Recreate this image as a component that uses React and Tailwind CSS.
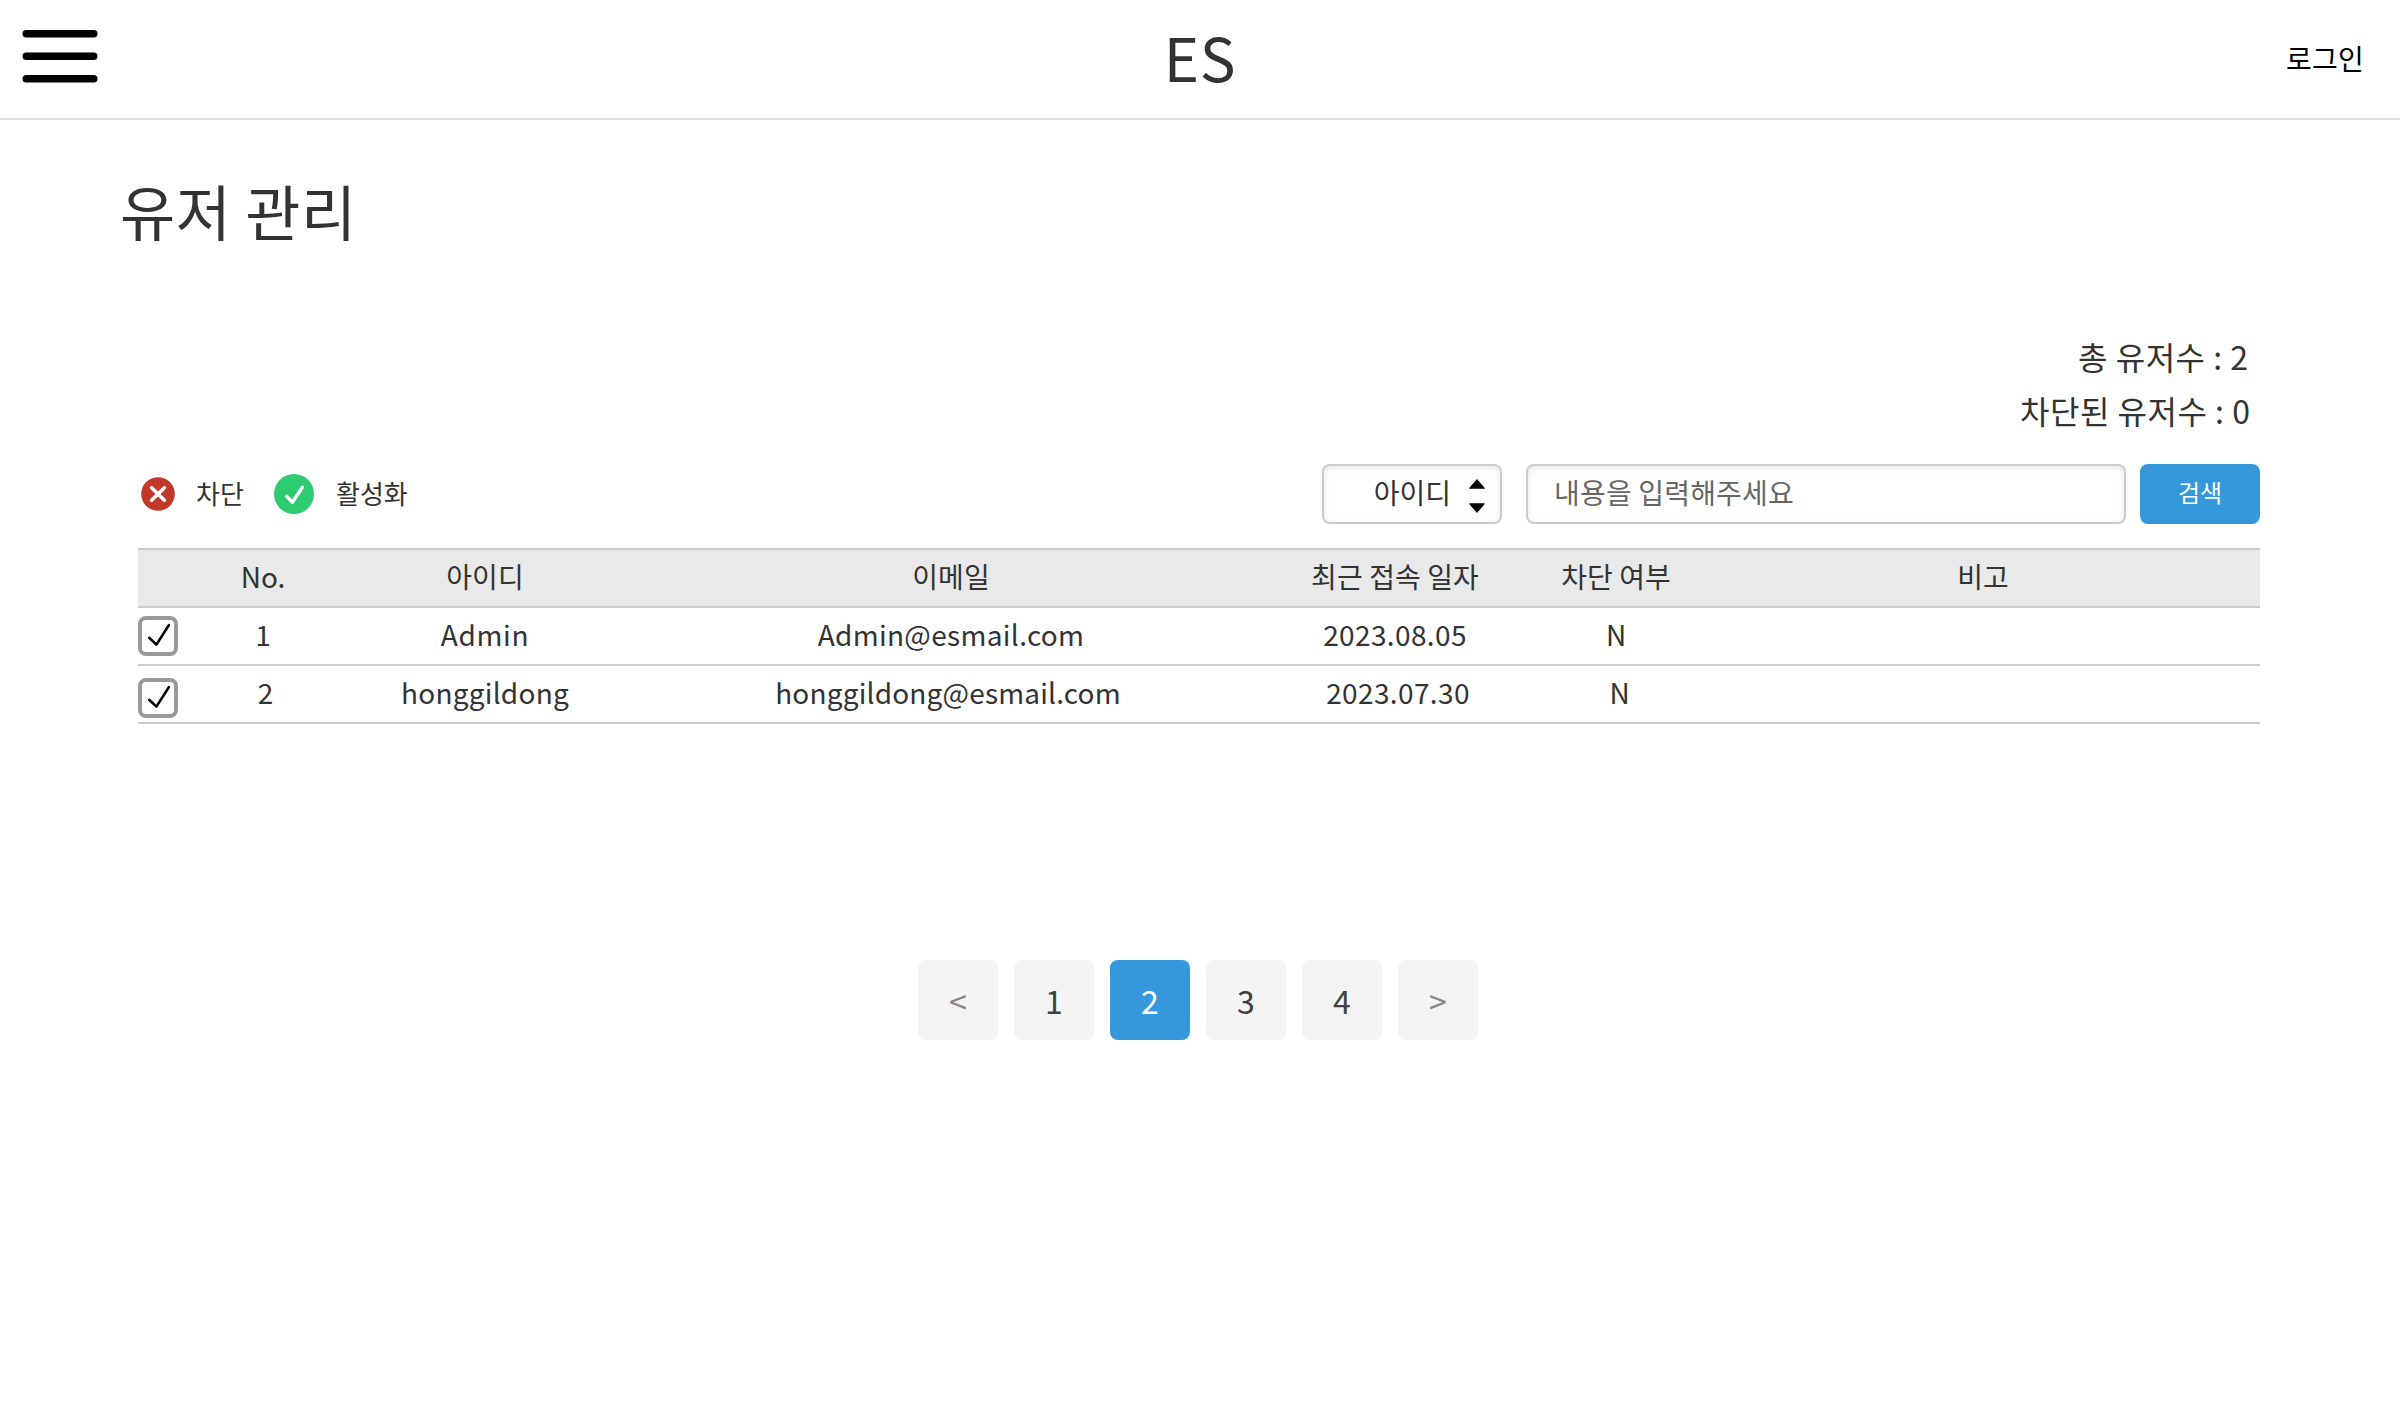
import React from "react";

const COLUMNS =
  "grid grid-cols-[40px_170px_274px_658px_230px_212px_522px_16px] h-[58px] border-b-2 border-[#cccccc] text-[28px] leading-[52px]";

const HEADERS = [
  { text: "No." },
  { text: "아이디" },
  { text: "이메일" },
  { text: "최근 접속 일자", style: "tracking-[0.1px]" },
  { text: "차단 여부", style: "tracking-[0.06px]" },
  { text: "비고" },
];

const USERS = [
  {
    box: "mt-2",
    cells: [
      { text: "1" },
      { text: "Admin", style: "tracking-[0.67px]" },
      { text: "Admin@esmail.com", style: "tracking-[0.33px]" },
      { text: "2023.08.05", style: "tracking-[0.38px]" },
      { text: "N" },
      { text: "" },
    ],
  },
  {
    box: "mt-3",
    cells: [
      { text: "2", style: "translate-x-[2.5px]" },
      { text: "honggildong", style: "tracking-[0.23px]" },
      { text: "honggildong@esmail.com", style: "tracking-[0.17px] -translate-x-[3px]" },
      { text: "2023.07.30", style: "tracking-[0.38px] translate-x-[3px]" },
      { text: "N", style: "translate-x-[3.5px]" },
      { text: "" },
    ],
  },
];

function MenuIcon() {
  return (
    <svg width="76" height="53" viewBox="0 0 76 53" stroke="#000" strokeWidth="7.5" strokeLinecap="round">
      <path d="M4.25 3.75H71.75M4.25 26.25H71.75M4.25 48.75H71.75" />
    </svg>
  );
}

function BlockIcon() {
  return (
    <svg width="40" height="40" viewBox="0 0 40 40">
      <circle cx="20" cy="20" r="16.8" fill="#c0392b" />
      <path d="M13.6 13.8L26.4 26.2M26.4 13.8L13.6 26.2" stroke="#fff" strokeWidth="3.6" strokeLinecap="round" />
    </svg>
  );
}

function ActiveIcon() {
  return (
    <svg width="40" height="40" viewBox="0 0 40 40">
      <circle cx="20" cy="20" r="20" fill="#2ecc71" />
      <path d="M12.7 22.4L18.4 28.2L28.4 13.2" fill="none" stroke="#fff" strokeWidth="3.4" strokeLinecap="round" strokeLinejoin="round" />
    </svg>
  );
}

function Checkbox({ className }) {
  return (
    <span className={`flex h-10 w-10 rounded-lg border-4 border-[#999999] bg-white ${className}`}>
      <svg width="32" height="32" viewBox="0 0 32 32" fill="none" stroke="#000" strokeWidth="2.6" strokeLinecap="round" strokeLinejoin="round">
        <path d="M7.2 17.8L14.4 24.6L26.8 5.2" />
      </svg>
    </span>
  );
}

function Cell({ text, style = "" }) {
  return (
    <div className="flex justify-center whitespace-nowrap">
      <span className={style}>{text}</span>
    </div>
  );
}

function PageButton({ children, tone = "bg-[#f4f4f4] text-[#404040]" }) {
  return (
    <button className={`h-20 w-20 rounded-lg text-center text-[32px] leading-[80px] ${tone}`}>{children}</button>
  );
}

export default function App() {
  return (
    <div className="min-h-[1428px] w-[2400px] bg-white font-['Noto_Sans_CJK_KR','Noto_Sans',sans-serif] text-[#333333]">
      <header className="grid h-[120px] grid-cols-3 border-b-2 border-[#e0e0e0]">
        <div className="pt-[30px] pl-[22px]">
          <MenuIcon />
        </div>
        <div className="pt-3 text-center text-[60px] leading-[87px] tracking-[0.66px]">ES</div>
        <div className="pt-[38px] pr-9 text-right text-[28px] leading-10 tracking-[0.24px] text-black">로그인</div>
      </header>

      <main>
        <h1 className="pt-[46px] pl-[120px] text-[60px] leading-[87px] tracking-[0.5px]">유저 관리</h1>

        <div className="mt-[76px] mr-[149px] flex flex-col items-end text-[32px] leading-[54px]">
          <p className="mr-[2.5px] tracking-[0.5px]">총 유저수 : 2</p>
          <p className="mr-[0.5px] tracking-[0.52px]">차단된 유저수 : 0</p>
        </div>

        <div className="mt-[27px] ml-[138px] flex h-[60px] w-[2122px] items-center">
          <BlockIcon />
          <span className="ml-[18px] w-12 pb-[3px] text-[26px] leading-[37px] whitespace-nowrap">차단</span>
          <span className="ml-[30px] flex">
            <ActiveIcon />
          </span>
          <span className="ml-[22px] pb-[3px] text-[26px] leading-[37px] whitespace-nowrap">활성화</span>

          <div className="ml-auto flex h-[60px] w-[180px] items-center justify-end rounded-lg border-2 border-[#cccccc] pr-[15px] shadow-[inset_0_2px_6px_rgba(0,0,0,0.1)]">
            <span className="pb-1 text-[28px] leading-10">아이디</span>
            <svg className="mt-1 ml-[18px]" width="16" height="34" viewBox="0 0 16 34">
              <path d="M8 0L16 9.2Q15.6 9.8 15 9.8H1Q0.4 9.8 0 9.2ZM8 34L16 24.8Q15.6 24.2 15 24.2H1Q0.4 24.2 0 24.8Z" fill="#000" />
            </svg>
          </div>
          <div className="ml-6 flex h-[60px] w-[600px] items-center rounded-lg border-2 border-[#cccccc] pb-1 pl-[26px] text-[28px] leading-10 tracking-[0.18px] text-[#666666] shadow-[inset_0_2px_6px_rgba(0,0,0,0.1)]">
            내용을 입력해주세요
          </div>
          <button className="ml-3.5 h-[60px] w-[120px] rounded-lg bg-[#3498db] pb-[5px] text-[24px] leading-[35px] text-white">
            검색
          </button>
        </div>

        <section className="mt-6 ml-[138px] w-[2122px] border-t-2 border-[#cccccc]">
          <div className={`${COLUMNS} bg-[#e9e9e9]`}>
            <div />
            {HEADERS.map((cell) => (
              <Cell key={cell.text} {...cell} />
            ))}
          </div>
          {USERS.map((user, row) => (
            <div key={row} className={COLUMNS}>
              <Checkbox className={user.box} />
              {user.cells.map((cell, i) => (
                <Cell key={i} {...cell} />
              ))}
            </div>
          ))}
        </section>

        <nav className="mt-[236px] ml-[918px] flex gap-4">
          <PageButton tone="bg-[#f4f4f4] text-[#888888]">&lt;</PageButton>
          <PageButton>1</PageButton>
          <PageButton tone="bg-[#3498db] text-white">2</PageButton>
          <PageButton>3</PageButton>
          <PageButton>4</PageButton>
          <PageButton tone="bg-[#f4f4f4] text-[#888888]">&gt;</PageButton>
        </nav>
      </main>
    </div>
  );
}
